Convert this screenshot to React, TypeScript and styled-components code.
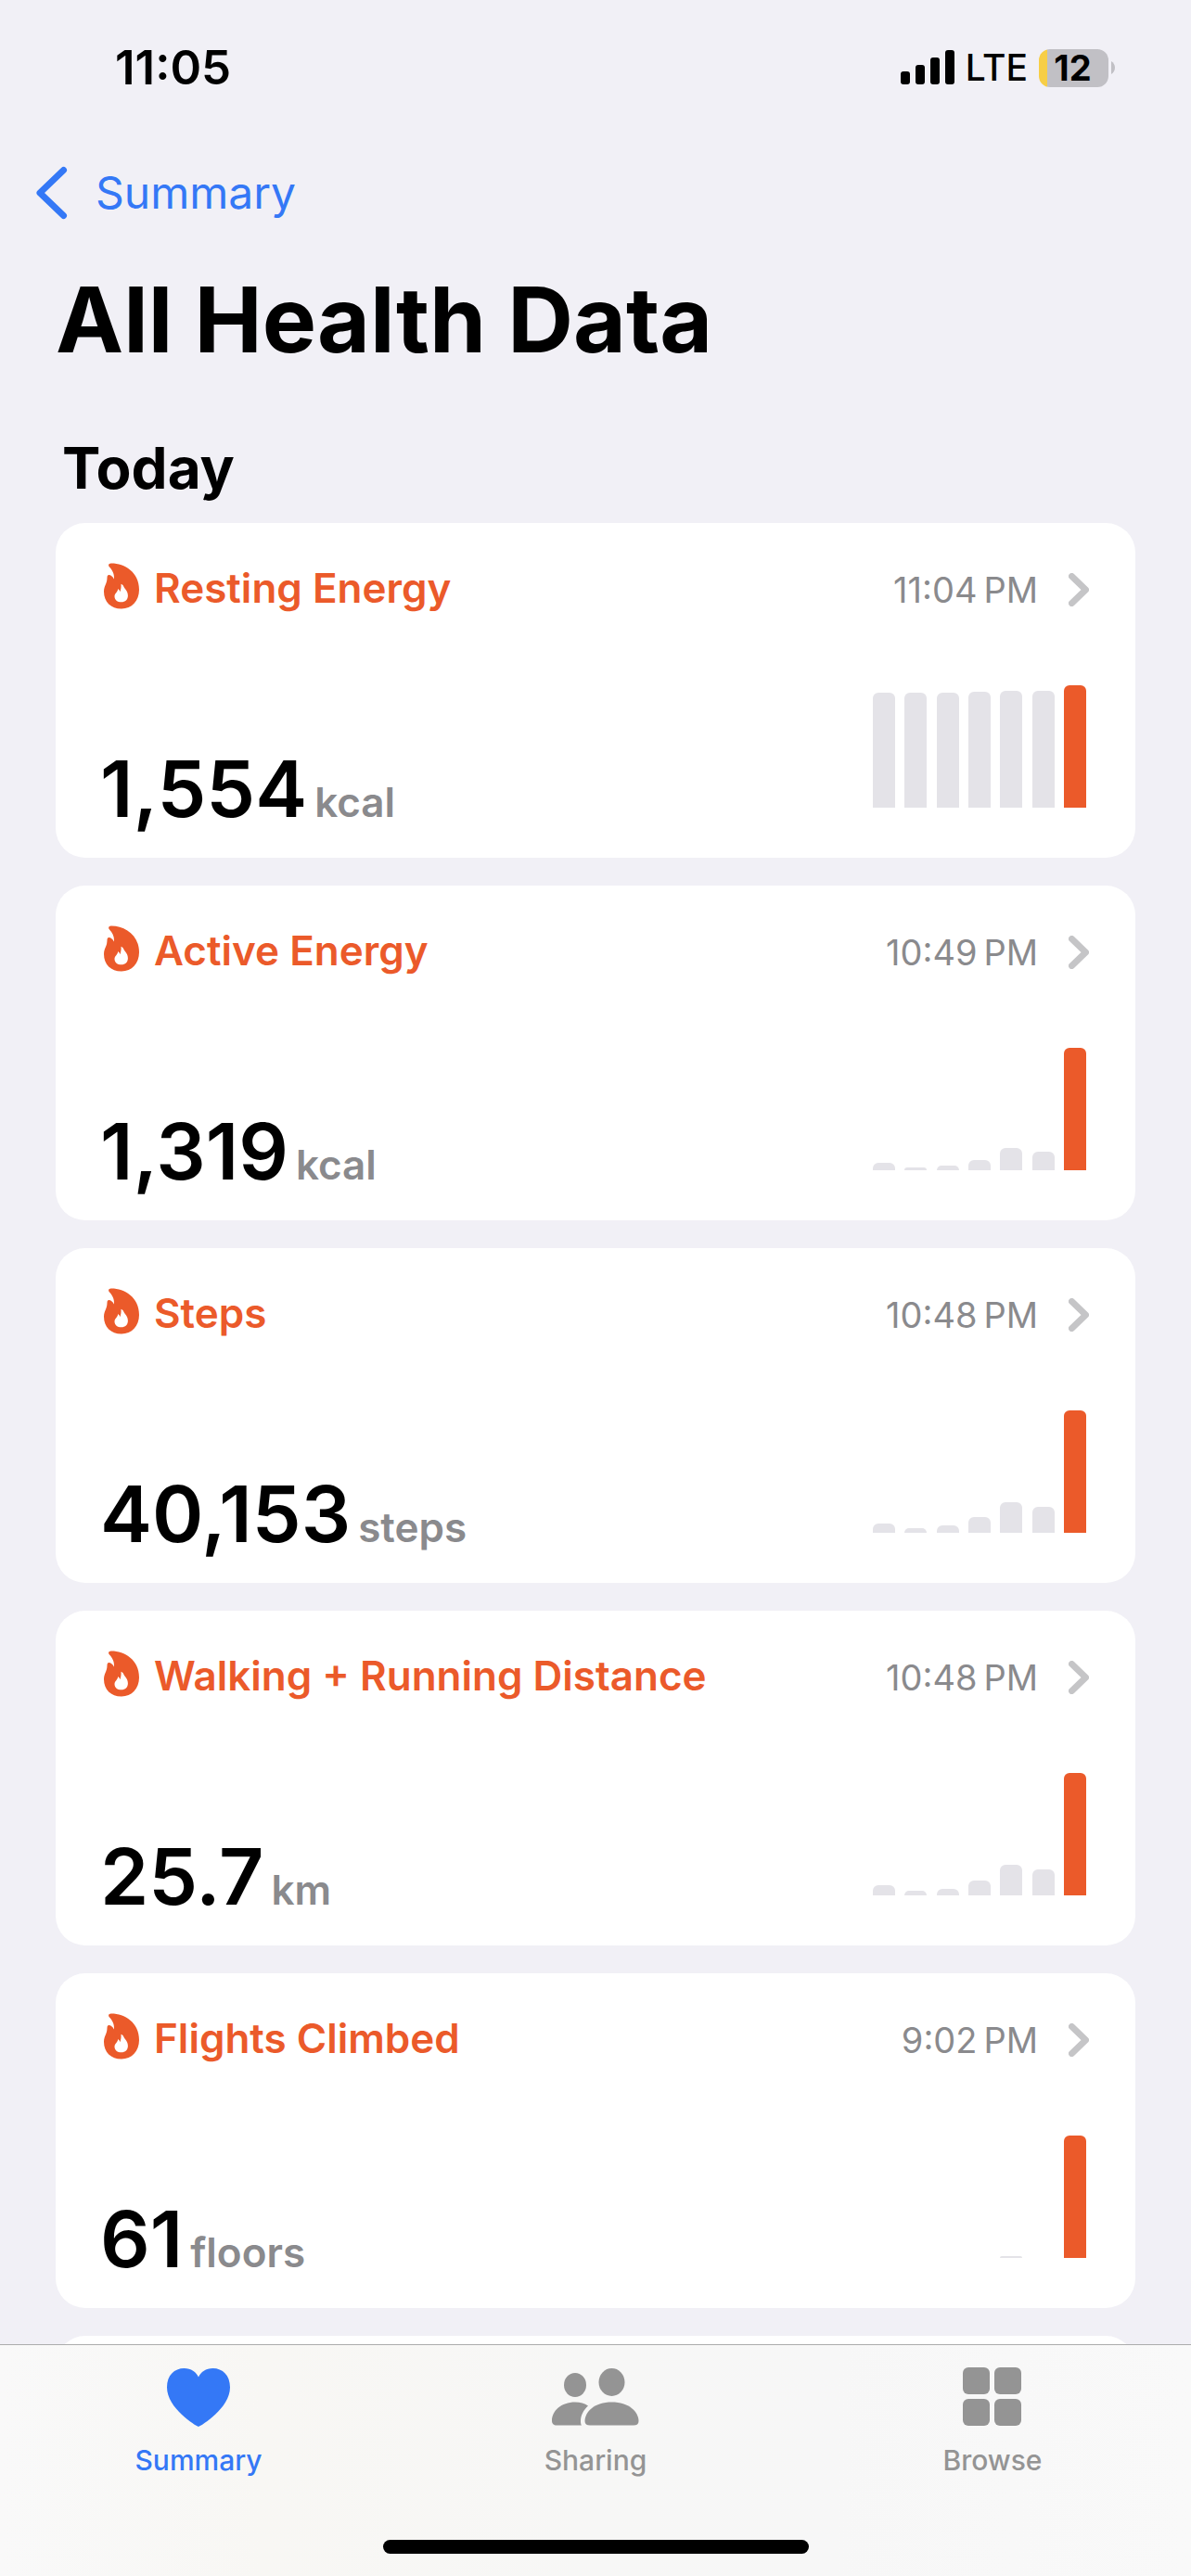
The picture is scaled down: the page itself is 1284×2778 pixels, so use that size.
import React from "react";
import styled, { createGlobalStyle } from "styled-components";

const GlobalStyle = createGlobalStyle`
  * { box-sizing: border-box; }
  html, body, #root { height: 100%; }
  body {
    margin: 0;
    background: #f1f0f6;
    color: #000;
    font-family: Inter, "Liberation Sans", sans-serif;
    font-optical-sizing: auto;
    overflow: hidden;
  }
  button { font: inherit; color: inherit; border: 0; padding: 0; background: none; cursor: pointer; }
`;

const Screen = styled.div`
  display: flex;
  flex-direction: column;
  height: 100vh;
`;

const Scroller = styled.main`
  flex: 1;
  min-height: 0;
  overflow: hidden;
`;

const StatusBar = styled.header`
  display: flex;
  align-items: center;
  justify-content: space-between;
  height: 146px;
  padding: 0 82px 0 124px;
`;

const Clock = styled.time`
  font-size: 51px;
  line-height: 60px;
  font-weight: 600;
`;

const StatusIcons = styled.div`
  display: flex;
  align-items: center;
  gap: 12px;
`;

const Carrier = styled.span`
  font-size: 39px;
  line-height: 48px;
  font-weight: 500;
`;

const BatteryGroup = styled.div`
  display: flex;
  align-items: center;
  gap: 3px;
`;

const Battery = styled.div`
  width: 75px;
  height: 41px;
  padding-right: 2px;
  border-radius: 12px;
  background: linear-gradient(to right, #f7ce46 9px, #c1c0c5 9px);
  font-size: 38px;
  line-height: 41px;
  font-weight: 700;
  text-align: center;
`;

const NavBar = styled.nav`
  display: flex;
  align-items: center;
  height: 124px;
  padding: 0 39px;
`;

const BackLink = styled.a`
  display: flex;
  align-items: center;
  gap: 30px;
  color: #3478f6;
  font-size: 48px;
  line-height: 60px;
  text-decoration: none;
`;

const PageTitle = styled.h1`
  margin: 0;
  padding: 15px 60px 0;
  font-size: 98px;
  line-height: 120px;
  font-weight: 700;
`;

const Section = styled.section`
  padding: 60px 60px 0;
`;

const SectionTitle = styled.h2`
  margin: 0 0 19px;
  padding: 0 7px;
  font-size: 62px;
  line-height: 80px;
  font-weight: 700;
`;

const CardList = styled.ul`
  display: grid;
  gap: 30px;
  margin: 0;
  padding: 0;
  list-style: none;
`;

const Card = styled.li`
  display: flex;
  flex-direction: column;
  justify-content: space-between;
  height: 361px;
  padding: 42px 50px 30px 48px;
  border-radius: 32px;
  background: #fff;
`;

const CardHead = styled.button`
  display: flex;
  align-items: flex-start;
  justify-content: space-between;
  width: 100%;
  height: 56px;
  text-align: left;
`;

const CardLabel = styled.span`
  display: flex;
  align-items: center;
  gap: 14px;
`;

const CardName = styled.span`
  color: #eb5a2a;
  font-size: 44px;
  line-height: 56px;
  font-weight: 600;
`;

const CardMeta = styled.span`
  display: flex;
  align-items: center;
  gap: 33px;
  padding-top: 2px;
`;

const CardTime = styled.time`
  color: #8a8a8d;
  font-size: 38px;
  line-height: 56px;
`;

const CardBody = styled.div`
  display: flex;
  align-items: flex-end;
  justify-content: space-between;
`;

const Reading = styled.p`
  display: flex;
  align-items: baseline;
  gap: 8px;
  margin: 0;
`;

const Amount = styled.span`
  font-size: 84px;
  line-height: 88px;
  font-weight: 600;
`;

const Unit = styled.span`
  color: #8a8a8d;
  font-size: 44px;
  font-weight: 600;
`;

const Chart = styled.div`
  display: flex;
  align-items: flex-end;
  justify-content: space-between;
  width: 230px;
  height: 156px;
  margin-right: 3px;
  padding-bottom: 24px;
`;

const Bar = styled.div<{ $today: boolean }>`
  width: 24px;
  border-radius: 6px 6px 0 0;
  background: ${(p) => (p.$today ? "#eb5a2a" : "#e4e3e8")};
`;

const TabBar = styled.nav`
  display: grid;
  grid-template-columns: repeat(3, 1fr);
  grid-template-rows: 1fr 39px;
  height: 250px;
  border-top: 1px solid #acacac;
  background: linear-gradient(to right, #f9f9f9, #f8f7f4 22%, #f7f7f6 50%, #f7f7f7 70%, #f9f9f9);
`;

const Tab = styled.button<{ $active?: boolean }>`
  display: flex;
  flex-direction: column;
  align-items: center;
  gap: 18px;
  padding-top: 20px;
  color: ${(p) => (p.$active ? "#3478f6" : "#949494")};
  font-size: 30px;
  line-height: 36px;
  font-weight: 500;
`;

const HomeIndicator = styled.div`
  grid-column: 1 / -1;
  justify-self: center;
  width: 459px;
  height: 15px;
  border-radius: 8px;
  background: #000;
`;

const SignalIcon = () => (
  <svg width="58" height="38" viewBox="0 0 58 38" aria-hidden="true">
    <rect x="0" y="23" width="10" height="14" rx="3" />
    <rect x="16" y="16" width="10" height="21" rx="3" />
    <rect x="32" y="8" width="10" height="29" rx="3" />
    <rect x="48" y="0" width="10" height="37" rx="3" />
  </svg>
);

const BatteryTip = () => (
  <svg width="4" height="14" viewBox="0 0 4 14" aria-hidden="true">
    <path d="M0 0C2.500 1.500 4 4 4 7S2.500 12.500 0 14Z" fill="#c1c0c5" />
  </svg>
);

const BackIcon = () => (
  <svg width="34" height="58" viewBox="0 0 34 58" fill="none" aria-hidden="true">
    <path d="M29.500 4.500L4 29L29.500 53.500" stroke="#3478f6" strokeWidth="7" strokeLinecap="round" strokeLinejoin="round" />
  </svg>
);

const ChevronIcon = () => (
  <svg width="22" height="36" viewBox="0 0 22 36" fill="none" aria-hidden="true">
    <path d="M3.500 3.500L18.500 18L3.500 32.500" stroke="#c5c5c7" strokeWidth="7" strokeLinecap="round" strokeLinejoin="round" />
  </svg>
);

const FlameIcon = () => (
  <svg width="44" height="54" viewBox="-2 0 44 54" aria-hidden="true">
    <path
      fill="#eb5a2a"
      fillRule="evenodd"
      d="M9.500 0.600C24 0.300 40 10 40 29C40 41 32 49.500 21 49.500C9.500 49.500 2 42 2 31C2 27.500 3 25 4.200 22.500C5.600 19.500 5.300 17.500 5.600 14.800C5.900 12.800 8 12.500 9.400 13.600C11 14.700 12.200 16 13 17.400C13.300 11.500 11.300 8 8 4.400C6.300 2.600 7.200 0.800 9.500 0.600ZM20.500 22.800C20.800 26 20.300 28.500 19.500 31.200C19 29.700 18.300 28.800 17.200 28C17 31.500 13.500 32.800 13.500 36.200C13.500 40 16.600 42.300 20.800 42.300C25 42.300 27.900 39.800 27.900 35.300C27.900 30 24.500 28.200 23.300 25.400C22.800 24.200 21.700 23.200 20.500 22.800Z"
    />
  </svg>
);

const HeartIcon = () => (
  <svg width="68" height="68" viewBox="0 0 68 68" fill="currentColor" aria-hidden="true">
    <path d="M34 68C31 67 0 48 0 25.500C0 12.500 8 5 18.500 5C26 5 31.500 9 34 14.500C36.500 9 42 5 49.500 5C60 5 68 12.500 68 25.500C68 48 37 67 34 68Z" />
  </svg>
);

const PeopleIcon = () => (
  <svg width="94" height="68" viewBox="0 0 94 68" fill="currentColor" aria-hidden="true">
    <ellipse cx="25" cy="23" rx="12" ry="13" />
    <ellipse cx="64.500" cy="20" rx="14" ry="15" />
    <path d="M5 66.500C2 66.500 0 65 0 61.500C0 51 10 41.500 25 41.500C30.500 41.500 35.500 43 39 45.500C34 50 31 56 31 62C31 64 31.300 65.500 32 66.500Z" />
    <path d="M41 66.500C37.500 66.500 35.500 65 35.500 62C35.500 52 46 41.500 64.500 41.500C83 41.500 93.500 52 93.500 62C93.500 65 91.500 66.500 88 66.500Z" />
  </svg>
);

const GridIcon = () => (
  <svg width="64" height="68" viewBox="0 0 64 68" fill="currentColor" aria-hidden="true">
    <rect x="0" y="4" width="29" height="29" rx="6" />
    <rect x="34" y="4" width="29" height="29" rx="6" />
    <rect x="0" y="38" width="29" height="29" rx="6" />
    <rect x="34" y="38" width="29" height="29" rx="6" />
  </svg>
);

interface Metric {
  name: string;
  time: string;
  amount: string;
  unit: string;
  week: number[];
}

const metrics: Metric[] = [
  { name: "Resting Energy", time: "11:04\u2009PM", amount: "1,554", unit: "kcal", week: [124, 124, 124, 125, 126, 126, 132] },
  { name: "Active Energy", time: "10:49\u2009PM", amount: "1,319", unit: "kcal", week: [8, 3, 5, 11, 24, 20, 132] },
  { name: "Steps", time: "10:48\u2009PM", amount: "40,153", unit: "steps", week: [10, 5, 8, 17, 33, 28, 132] },
  { name: "Walking + Running Distance", time: "10:48\u2009PM", amount: "25.7", unit: "km", week: [11, 5, 7, 16, 33, 28, 132] },
  { name: "Flights Climbed", time: "9:02\u2009PM", amount: "61", unit: "floors", week: [0, 0, 0, 0, 2, 0, 132] },
];

const MetricCard = ({ metric }: { metric: Metric }) => (
  <Card>
    <CardHead type="button">
      <CardLabel>
        <FlameIcon />
        <CardName>{metric.name}</CardName>
      </CardLabel>
      <CardMeta>
        <CardTime>{metric.time}</CardTime>
        <ChevronIcon />
      </CardMeta>
    </CardHead>
    <CardBody>
      <Reading>
        <Amount>{metric.amount}</Amount>
        <Unit>{metric.unit}</Unit>
      </Reading>
      <Chart>
        {metric.week.map((height, day) => (
          <Bar key={day} $today={day === metric.week.length - 1} style={{ height }} />
        ))}
      </Chart>
    </CardBody>
  </Card>
);

export default function App() {
  return (
    <>
      <GlobalStyle />
      <Screen>
        <Scroller>
          <StatusBar>
            <Clock>11:05</Clock>
            <StatusIcons>
              <SignalIcon />
              <Carrier>LTE</Carrier>
              <BatteryGroup>
                <Battery>12</Battery>
                <BatteryTip />
              </BatteryGroup>
            </StatusIcons>
          </StatusBar>
          <NavBar>
            <BackLink href="#summary">
              <BackIcon />
              Summary
            </BackLink>
          </NavBar>
          <PageTitle>All Health Data</PageTitle>
          <Section>
            <SectionTitle>Today</SectionTitle>
            <CardList>
              {metrics.map((metric) => (
                <MetricCard key={metric.name} metric={metric} />
              ))}
              <Card />
            </CardList>
          </Section>
        </Scroller>
        <TabBar>
          <Tab type="button" $active>
            <HeartIcon />
            Summary
          </Tab>
          <Tab type="button">
            <PeopleIcon />
            Sharing
          </Tab>
          <Tab type="button">
            <GridIcon />
            Browse
          </Tab>
          <HomeIndicator />
        </TabBar>
      </Screen>
    </>
  );
}
